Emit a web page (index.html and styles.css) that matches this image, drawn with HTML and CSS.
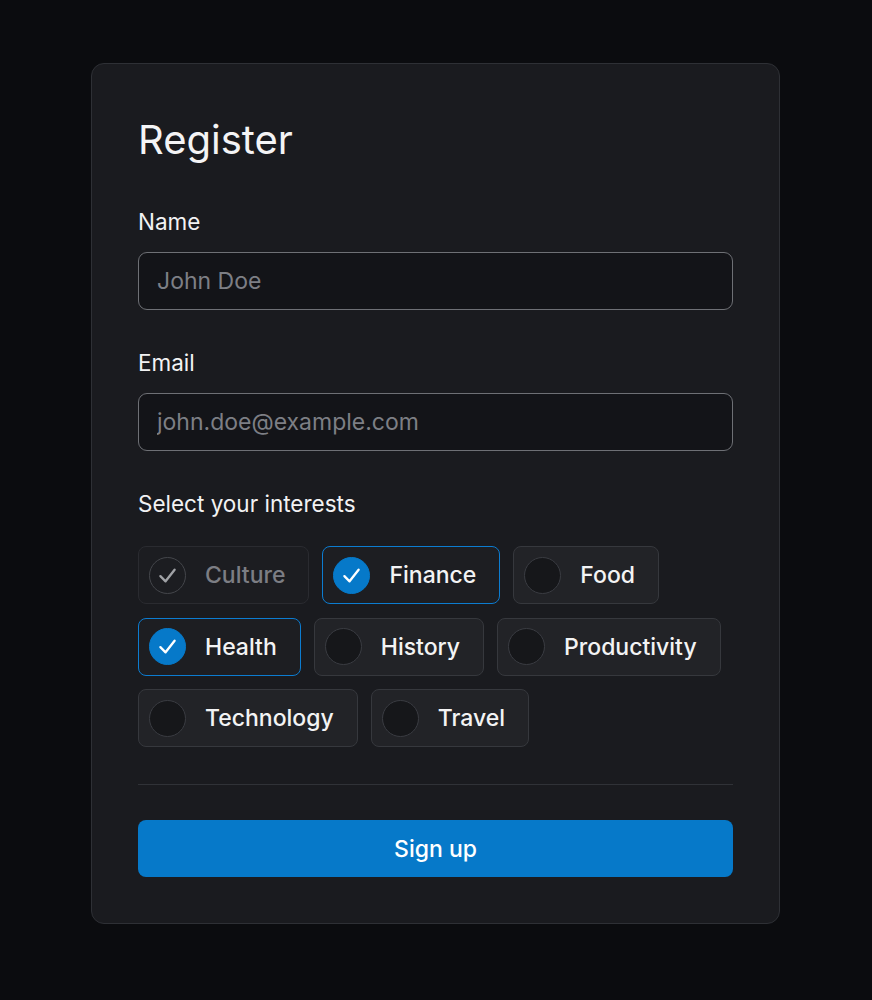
FILE: index.html
```html
<!DOCTYPE html>
<html lang="en">
<head>
<meta charset="utf-8">
<title>Register</title>
<link rel="stylesheet" href="styles.css">
</head>
<body>
<main class="page">
  <form class="card">
    <h1 class="title">Register</h1>
    <div class="field">
      <label class="label" for="name">Name</label>
      <input class="input" id="name" type="text" placeholder="John Doe">
    </div>
    <div class="field">
      <label class="label" for="email">Email</label>
      <input class="input" id="email" type="email" placeholder="john.doe@example.com">
    </div>
    <div class="field">
      <span class="label">Select your interests</span>
      <div class="chips">
        <span class="chip chip-disabled"><span class="dot"><svg viewBox="0 0 24 24"><polyline points="6.5 12.5 10.5 16.5 17.5 7.5"/></svg></span><span class="chip-text">Culture</span></span>
        <span class="chip chip-on"><span class="dot"><svg viewBox="0 0 24 24"><polyline points="6.5 12.5 10.5 16.5 17.5 7.5"/></svg></span><span class="chip-text">Finance</span></span>
        <span class="chip"><span class="dot"></span><span class="chip-text">Food</span></span>
        <span class="chip chip-on"><span class="dot"><svg viewBox="0 0 24 24"><polyline points="6.5 12.5 10.5 16.5 17.5 7.5"/></svg></span><span class="chip-text">Health</span></span>
        <span class="chip"><span class="dot"></span><span class="chip-text">History</span></span>
        <span class="chip"><span class="dot"></span><span class="chip-text">Productivity</span></span>
        <span class="chip"><span class="dot"></span><span class="chip-text">Technology</span></span>
        <span class="chip"><span class="dot"></span><span class="chip-text">Travel</span></span>
      </div>
    </div>
    <hr class="divider">
    <button class="submit" type="button">Sign up</button>
  </form>
</main>
</body>
</html>
```
FILE: styles.css
```css
* { box-sizing: border-box; }
html, body {
  margin: 0;
  padding: 0;
  background: #0b0c0f;
  font-family: Inter, "Noto Sans", sans-serif;
  color: #f2f2f3;
}
.page {
  padding: 63px 92px 0 91px;
  min-height: 1000px;
}
.card {
  width: 689px;
  background: #1a1b1f;
  border: 1px solid #2e3035;
  border-radius: 13px;
  padding: 47px 46px 46px 46px;
  display: flex;
  flex-direction: column;
}
.title {
  margin: 0;
  font-size: 40px;
  font-weight: 400;
  line-height: 58px;
  color: #f4f4f5;
}
.field {
  display: flex;
  flex-direction: column;
  margin-top: 38px;
}
.label {
  font-size: 22.5px;
  line-height: 30px;
  font-weight: 400;
  color: #f2f2f3;
  margin-bottom: 15px;
}
.field:last-of-type .label { margin-bottom: 27px; }
.input {
  height: 58px;
  width: 100%;
  background: #131418;
  border: 1.5px solid #6e7075;
  border-radius: 9px;
  padding: 0 18px;
  font-family: inherit;
  font-size: 23px;
  color: #f2f2f3;
  outline: none;
}
.input::placeholder { color: #7d7f85; }
.chips {
  display: flex;
  flex-wrap: wrap;
  column-gap: 13px;
  row-gap: 13.5px;
}
.chip {
  height: 58px;
  display: inline-flex;
  align-items: center;
  gap: 19px;
  padding: 0 23px 0 10px;
  background: #222327;
  border: 1px solid #36383d;
  border-radius: 8px;
  font-size: 23px;
  font-weight: 500;
  color: #f3f3f4;
}
.dot {
  width: 37px;
  height: 37px;
  border-radius: 50%;
  background: #16171a;
  border: 1.5px solid #3a3c42;
  display: flex;
  align-items: center;
  justify-content: center;
  flex: none;
}
.dot svg {
  width: 31px;
  height: 31px;
  fill: none;
  stroke: #ffffff;
  stroke-width: 1.8;
  stroke-linecap: round;
  stroke-linejoin: round;
}
.chip-on {
  border-color: #0c7cd0;
  background: #1d1e22;
}
.chip-on .dot {
  background: #0679c9;
  border-color: #0679c9;
}
.chip-disabled {
  background: #1c1d21;
  border-color: #2a2b30;
  color: #7c7e84;
}
.chip-disabled .dot {
  background: transparent;
  border-color: #44464b;
}
.chip-disabled .dot svg { stroke: #a0a2a6; }
.divider {
  margin: 37px 0 0 0;
  border: 0;
  border-top: 1px solid #303237;
  height: 0;
}
.submit {
  margin-top: 35px;
  height: 57px;
  width: 100%;
  border: 0;
  border-radius: 8px;
  background: #0679c9;
  color: #ffffff;
  font-family: inherit;
  font-size: 23px;
  font-weight: 500;
}
```
